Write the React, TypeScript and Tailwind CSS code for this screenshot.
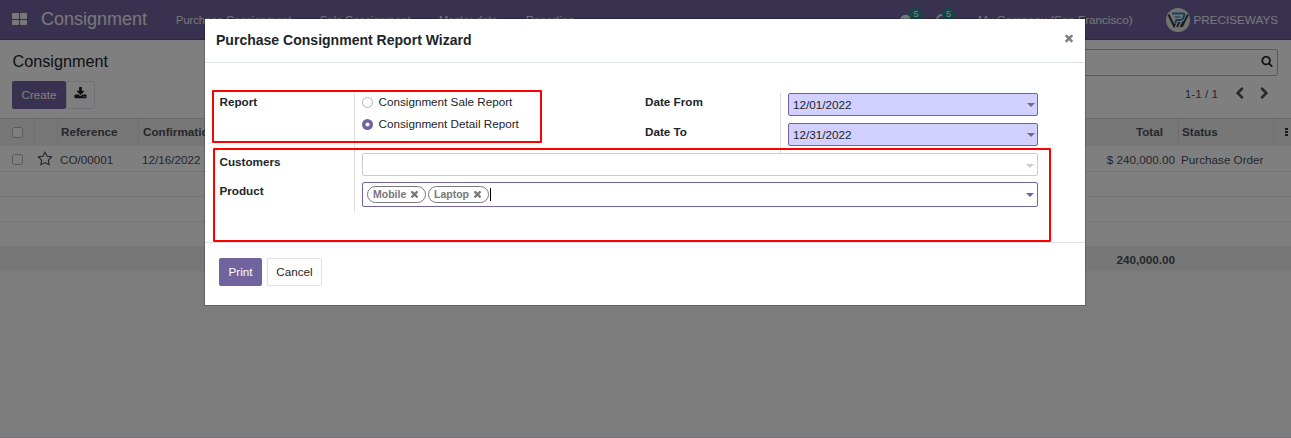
import React from "react";

const paths = {
  times:
    "M1490 1322q0 40-28 68l-136 136q-28 28-68 28t-68-28l-294-294-294 294q-28 28-68 28t-68-28l-136-136q-28-28-28-68t28-68l294-294-294-294q-28-28-28-68t28-68l136-136q28-28 68-28t68 28l294 294 294-294q28-28 68-28t68 28l136 136q28 28 28 68t-28 68l-294 294 294 294q28 28 28 68z",
  download:
    "M1344 1344q0-26-19-45t-45-19-45 19-19 45 19 45 45 19 45-19 19-45zm256 0q0-26-19-45t-45-19-45 19-19 45 19 45 45 19 45-19 19-45zm128-224v320q0 40-28 68t-68 28h-1472q-40 0-68-28t-28-68v-320q0-40 28-68t68-28h465l135 136q58 56 136 56t136-56l136-136h464q40 0 68 28t28 68zm-325-569q17 41-14 70l-448 448q-18 19-45 19t-45-19l-448-448q-31-29-14-70 17-39 59-39h256v-448q0-26 19-45t45-19h256q26 0 45 19t19 45v448h256q42 0 59 39z",
  search:
    "M1216 832q0-185-131.5-316.5t-316.5-131.5-316.5 131.5-131.5 316.5 131.5 316.5 316.5 131.5 316.5-131.5 131.5-316.5zm512 832q0 52-38 90t-90 38q-54 0-90-38l-343-342q-179 124-399 124-143 0-273.5-55.5t-225-150-150-225-55.5-273.5 55.5-273.5 150-225 225-150 273.5-55.5 273.5 55.5 225 150 150 225 55.5 273.5q0 220-124 399l343 343q37 37 37 90z",
  star:
    "M1201 1004l306-297-422-62-189-382-189 382-422 62 306 297-73 421 378-199 377 199zm527-357q0 22-26 48l-363 354 86 500q1 7 1 20 0 50-41 50-19 0-40-12l-449-236-449 236q-22 12-40 12-21 0-31.5-14.500t-10.500-35.500q0-6 2-20l86-500-364-354q-25-27-25-48 0-37 56-46l502-73 225-455q19-41 49-41t49 41l225 455 502 73q56 9 56 46z",
  left:
    "M1427 301l-531 531 531 531q19 19 19 45t-19 45l-166 166q-19 19-45 19t-45-19l-742-742q-19-19-19-45t19-45l742-742q19-19 45-19t45 19l166 166q19 19 19 45t-19 45z",
  right:
    "M1363 877l-742 742q-19 19-45 19t-45-19l-166-166q-19-19-19-45t19-45l531-531-531-531q-19-19-19-45t19-45l166-166q19-19 45-19t45 19l742 742q19 19 19 45t-19 45z",
};

function Icon({ name, className }: { name: keyof typeof paths; className: string }) {
  return (
    <svg viewBox="0 0 1792 1792" className={`shrink-0 ${className}`} fill="currentColor">
      <path d={paths[name]} />
    </svg>
  );
}

function Logo() {
  return (
    <svg viewBox="0 0 24 24" className="h-6 w-6 shrink-0">
      <circle cx="12" cy="12" r="12" fill="#e4e4e4" />
      <path d="M6 5.500h11q2 0 1.300 2l-1.300 3q-.6 1.500-2.500 1.500h-4l-1.500 3.500" fill="none" stroke="#2a80b0" strokeWidth="2" />
      <path d="M8.500 9h6" stroke="#2a80b0" strokeWidth="1.200" />
      <path d="M2.500 6.500l5.500 11.500 1-2" fill="none" stroke="#333" strokeWidth="1.900" />
      <path d="M13.500 14l-2.500 5M17.500 13.500l-3 5.500M22 6.500l-6 12" fill="none" stroke="#333" strokeWidth="1.700" />
    </svg>
  );
}

function Check() {
  return <span className="block h-[11px] w-[11px] rounded-[2.500px] border border-[#adb5bd] bg-white" />;
}

function Caret({ className }: { className: string }) {
  return (
    <svg viewBox="0 0 8 4" className={`h-1 w-2 ${className}`} fill="currentColor">
      <path d="M0 0h8L4 4z" />
    </svg>
  );
}

function Tag({ label, className }: { label: string; className: string }) {
  return (
    <span className={`flex h-[17px] items-center justify-between rounded-full border border-[#777] pr-[5px] pl-[5px] text-[10.530px] leading-none font-bold text-[#777] ${className}`}>
      {label}
      <Icon name="times" className="h-[11px] w-[11px] -translate-y-[0.500px]" />
    </span>
  );
}

function Navbar() {
  return (
    <nav className="flex h-10 items-center border-b border-[#5a4f7f] bg-[#71639e] text-[11.700px] text-white/90">
      <div className="ml-3 grid -translate-y-px grid-cols-[7px_7px] gap-px">
        <span className="h-[6px] rounded-[1px] bg-white/90" />
        <span className="h-[6px] rounded-[1px] bg-white/90" />
        <span className="h-[5px] rounded-[1px] bg-white/90" />
        <span className="h-[5px] rounded-[1px] bg-white/90" />
      </div>
      <span className="-mt-[2px] ml-[14px] w-[135px] text-[18px] leading-none">Consignment</span>
      <div className="flex gap-[28.500px] pt-px text-[11.100px] whitespace-nowrap">
        <span>Purchase Consignment</span>
        <span>Sale Consignment</span>
        <span>Master data</span>
        <span>Reporting</span>
      </div>
      <div className="ml-auto flex items-center whitespace-nowrap">
        <div className="relative mr-[24px] h-3 w-3">
          <span className="block h-[10px] w-[11px] translate-y-px rounded-full bg-white/90" />
          <span className="absolute -top-[6px] left-[9px] h-[13px] w-[14px] rounded-full bg-[#2c8a8c] text-center text-[9px] leading-[13px] text-white">5</span>
        </div>
        <div className="relative mr-[30px] h-3 w-3">
          <span className="block h-3 w-3 rounded-full border-2 border-white/90" />
          <span className="absolute -top-[6px] left-[6px] h-[13px] w-[13px] rounded-full bg-[#2c8a8c] text-center text-[9px] leading-[13px] text-white">5</span>
        </div>
        <span className="mr-[33px] pt-px">My Company (San Francisco)</span>
        <Logo />
        <span className="mr-[13px] ml-[4px] pt-px">PRECISEWAYS</span>
      </div>
    </nav>
  );
}

function ControlPanel() {
  return (
    <header className="flex h-[78px] justify-between bg-white pr-[13px] pl-3">
      <div>
        <h1 className="pt-[10px] pl-[0.500px] text-[16.200px] leading-[22px] text-[#212529]">Consignment</h1>
        <div className="mt-[9px] flex">
          <button className="h-7 w-[54px] rounded-[2px] bg-[#71639e] text-[11.700px] text-white">Create</button>
          <button className="flex h-7 w-[29px] items-start justify-center rounded-[2px] border border-[#dee2e6] pt-[5px] pr-px text-[#212529]">
            <Icon name="download" className="h-[13px] w-[13px]" />
          </button>
        </div>
      </div>
      <div className="flex flex-col items-end">
        <div className="mt-[9px] flex h-[27px] w-[620px] items-start justify-end rounded-[2px] border border-[#adb5bd] pt-[5px] pr-[4px] text-[#212529]">
          <Icon name="search" className="h-3 w-3" />
        </div>
        <div className="mt-[9px] flex items-center pr-[7px] text-[11.700px] text-[#495057]">
          <span className="mr-[15px]">1-1 / 1</span>
          <Icon name="left" className="mr-[12px] h-[13px] w-[13px]" />
          <Icon name="right" className="h-[13px] w-[13px]" />
        </div>
      </div>
    </header>
  );
}

const cols = "grid grid-cols-[35px_23px_81px_941px_99px_95px_17px] items-center";

function List() {
  return (
    <div className="text-[11.700px] whitespace-nowrap text-[#495057]">
      <div className={`${cols} h-[28px] border-t border-[#d5d8dc] bg-[#eeeeee] pb-px font-bold`}>
        <div className="flex h-[26px] items-center border-r border-[#dee2e6] pl-3"><Check /></div>
        <div className="h-[26px] border-r border-[#dee2e6]" />
        <div className="flex h-[26px] items-center border-r border-[#dee2e6] pl-[3px]">Reference</div>
        <div className="pl-[4px]">Confirmation Date</div>
        <div className="flex h-[26px] items-center justify-end border-r border-[#dee2e6] pr-[15px]">Total</div>
        <div className="flex h-[26px] items-center border-r border-[#dee2e6] pl-[3px]">Status</div>
        <div className="flex flex-col items-end gap-[1px] pr-[3px]">
          <span className="h-[2px] w-[3px] bg-[#333]" />
          <span className="h-[2px] w-[3px] bg-[#333]" />
          <span className="h-[2px] w-[3px] bg-[#333]" />
        </div>
      </div>
      <div className={`${cols} h-[26px] border-b border-[#e3e5e8] bg-white pt-[2px]`}>
        <div className="pl-3"><Check /></div>
        <Icon name="star" className="ml-[2px] h-4 w-4 -translate-y-px" />
        <div className="pl-[2px]">CO/00001</div>
        <div className="pl-[3px]">12/16/2022 1</div>
        <div className="pr-[4px] text-right">$ 240,000.00</div>
        <div className="pl-[2px]">Purchase Order</div>
      </div>
      <div className="h-[25px] border-b border-[#e9ebed] bg-white" />
      <div className="h-[25px] border-b border-[#e9ebed] bg-white" />
      <div className="h-[24px] bg-white" />
      <div className={`${cols} h-[25px] bg-[#eeeeee] font-bold`}>
        <div className="col-span-4" />
        <div className="pt-[3px] pr-[4px] text-right">240,000.00</div>
      </div>
    </div>
  );
}

function DateField({ value }: { value: string }) {
  return (
    <div className="flex h-[23px] w-[250px] items-center justify-between rounded-[2px] border border-[#71639e] bg-[#d1d0ff] pt-px pr-[2px] pl-[4px]">
      <span>{value}</span>
      <Caret className="text-[#71639e]" />
    </div>
  );
}

function Wizard() {
  return (
    <div className="absolute top-[19px] left-[205px] h-[286px] w-[880px] bg-white text-[11.700px] text-[#212529] outline outline-black/20">
      <div className="flex h-11 items-start justify-between border-b border-[#dee2e6] pr-[10px] pl-[11px]">
        <h2 className="pt-[12px] text-[14.040px] leading-[18px] font-bold">Purchase Consignment Report Wizard</h2>
        <Icon name="times" className="mt-[13px] h-3 w-3 text-[#808080]" />
      </div>
      <div className="h-[180px] border-b border-[#dee2e6] pt-[30px] pl-[14.500px] leading-[18px]">
        <div className="flex">
          <div className="flex w-[425.500px]">
            <div className="h-[60px] w-[135.500px] border-r border-[#dddddd] font-bold">Report</div>
            <div className="ml-[7px] flex flex-col gap-[4px]">
              <label className="flex items-center gap-[5.500px]">
                <span className="h-[11px] w-[11px] rounded-full border border-[#adb5bd]" />
                Consignment Sale Report
              </label>
              <label className="flex items-center gap-[5.500px]">
                <svg viewBox="0 0 11 11" className="h-[11px] w-[11px]">
                  <circle cx="5.500" cy="5.500" r="5.500" fill="#71639e" />
                  <circle cx="5.500" cy="5.500" r="2" fill="#fff" />
                </svg>
                Consignment Detail Report
              </label>
            </div>
          </div>
          <div className="flex">
            <div className="flex h-[60px] w-[136px] flex-col gap-3 border-r border-[#dddddd] font-bold">
              <span>Date From</span>
              <span>Date To</span>
            </div>
            <div className="ml-[7px] flex flex-col gap-[7px]">
              <DateField value="12/01/2022" />
              <DateField value="12/31/2022" />
            </div>
          </div>
        </div>
        <div className="flex">
          <div className="flex h-[59px] w-[135.500px] flex-col gap-[11px] border-r border-[#dddddd] font-bold">
            <span>Customers</span>
            <span>Product</span>
          </div>
          <div className="ml-[7px] flex flex-col gap-[6px]">
            <div className="flex h-[23px] w-[676px] items-center justify-end rounded-[2px] border border-[#cccccc] pt-[3px] pr-[3px]">
              <Caret className="text-[#cccccc]" />
            </div>
            <div className="flex h-[25px] w-[676px] items-center rounded-[2px] border border-[#71639e] pr-[3px] pl-[4px]">
              <Tag label="Mobile" className="w-[59px]" />
              <span className="w-[2px]" />
              <Tag label="Laptop" className="w-[61px]" />
              <span className="ml-px h-[13px] w-px bg-black" />
              <Caret className="ml-auto text-[#71639e]" />
            </div>
          </div>
        </div>
      </div>
      <div className="flex gap-[5px] pt-[15px] pl-[14px]">
        <button className="h-7 w-[43px] rounded-[2px] bg-[#71639e] text-white">Print</button>
        <button className="h-7 w-[55px] rounded-[2px] border border-[#dee2e6]">Cancel</button>
      </div>
      <div className="absolute top-[71px] left-[7px] h-[53px] w-[330px] rounded-[1px] border-2 border-[#ff0000]" />
      <div className="absolute top-[129px] left-[8px] h-[94px] w-[838px] rounded-[1px] border-2 border-[#ff0000]" />
    </div>
  );
}

export default function App() {
  return (
    <div className="relative h-[438px] w-[1291px] overflow-hidden border-b border-[#776f76] bg-[#f9f9f9] font-['Liberation_Sans',Arial,sans-serif]">
      <Navbar />
      <ControlPanel />
      <List />
      <div className="absolute inset-0 bg-black/50" />
      <Wizard />
    </div>
  );
}
